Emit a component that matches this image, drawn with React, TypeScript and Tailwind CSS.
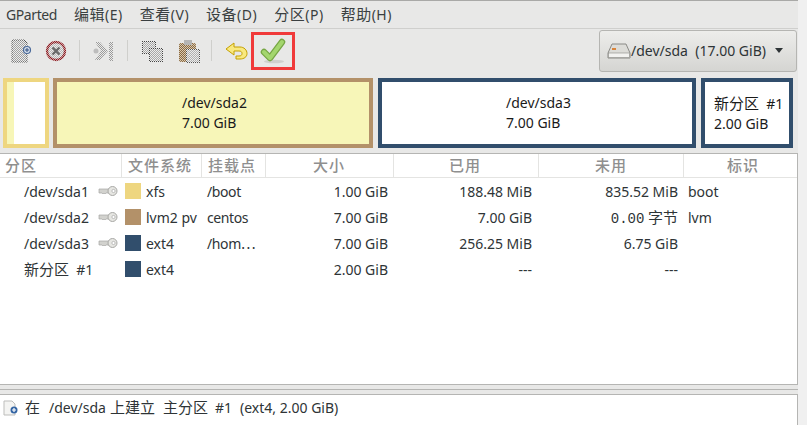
import React from "react";

const FONT = { fontFamily: '"Noto Sans", "Noto Sans CJK SC", sans-serif' };

const rows = [
  { name: "/dev/sda1", key: true, color: "bg-[#eed680]", fs: "xfs", mount: "/boot", size: "1.00 GiB", used: "188.48 MiB", flag: "boot" },
  { name: "/dev/sda2", key: true, color: "bg-[#b39169]", fs: "lvm2 pv", mount: "centos", size: "7.00 GiB", used: "7.00 GiB", flag: "lvm" },
  { name: "/dev/sda3", key: true, color: "bg-[#314e6c]", fs: "ext4", mount: "/hom⋯", size: "7.00 GiB", used: "256.25 MiB", flag: "" },
  { name: "new", key: false, color: "bg-[#314e6c]", fs: "ext4", mount: "", size: "2.00 GiB", used: "---", flag: "" },
];

const menus = [
  ["编辑", "(E)"],
  ["查看", "(V)"],
  ["设备", "(D)"],
  ["分区", "(P)"],
  ["帮助", "(H)"],
];

function Cjk({ children }: { children: React.ReactNode }) {
  return <span className="text-[15px]">{children}</span>;
}

function Dither({ id, color = "#8c8c8c", base = "#ececeb" }: { id: string; color?: string; base?: string }) {
  return (
    <pattern id={id} width="2" height="2" patternUnits="userSpaceOnUse">
      <rect width="2" height="2" fill={base} />
      <rect width="1" height="1" fill={color} />
      <rect x="1" y="1" width="1" height="1" fill={color} />
    </pattern>
  );
}

function NewIcon() {
  return (
    <svg width="22" height="24" viewBox="0 0 22 24">
      <defs><Dither id="d1" color="#a0a0a0" /><Dither id="d1b" color="#555" /></defs>
      <path d="M1 1h12l3 3v19H1z" fill="url(#d1)" />
      <path d="M1 1h12l3 3v19H1z" fill="none" stroke="url(#d1b)" />
      <circle cx="16" cy="11" r="3.5" fill="#d5deea" stroke="#4a6a9a" strokeWidth="1.2" />
      <path d="M14 11h4M16 9v4" stroke="#2f4f80" strokeWidth="1" />
    </svg>
  );
}

function DeleteIcon() {
  return (
    <svg width="22" height="22" viewBox="0 0 22 22">
      <defs><Dither id="d2" color="#b8b8b8" /><Dither id="d2b" color="#8f1d25" base="#c9a0a0" /></defs>
      <circle cx="11" cy="11" r="9" fill="url(#d2)" stroke="url(#d2b)" strokeWidth="2.4" />
      <path d="M7.5 7.5l7 7M14.5 7.5l-7 7" stroke="#6a6a6a" strokeWidth="2.4" />
    </svg>
  );
}

function ApplyAllIcon() {
  return (
    <svg width="22" height="22" viewBox="0 0 22 22">
      <defs><Dither id="d3" color="#9a9a9a" /></defs>
      <circle cx="4" cy="11" r="2.5" fill="#bdbdbd" />
      <path d="M3 2h5l8 9-8 9H3l6-9z" fill="url(#d3)" />
      <rect x="17" y="2" width="4" height="19" fill="url(#d3)" />
    </svg>
  );
}

function CopyIcon() {
  return (
    <svg width="22" height="22" viewBox="0 0 22 22">
      <defs><Dither id="d4" color="#a8a8a8" /><Dither id="d4b" color="#444" /></defs>
      <rect x="1.5" y="1.5" width="13" height="12" fill="url(#d4)" stroke="url(#d4b)" />
      <rect x="8.5" y="8.5" width="13" height="13" fill="url(#d4)" stroke="url(#d4b)" />
    </svg>
  );
}

function PasteIcon() {
  return (
    <svg width="22" height="24" viewBox="0 0 22 24">
      <defs>
        <Dither id="d5" color="#8a6a42" base="#d8c8b0" />
        <Dither id="d6" color="#b0b0b0" />
        <Dither id="d6b" color="#555" />
      </defs>
      <rect x="1" y="4" width="17" height="19" rx="2" fill="url(#d5)" />
      <rect x="6" y="1" width="8" height="5" fill="#b5b5b5" />
      <rect x="8.5" y="10.5" width="13" height="13" fill="url(#d6)" stroke="url(#d6b)" />
    </svg>
  );
}

function UndoIcon() {
  return (
    <svg width="23" height="18" viewBox="0 0 23 18">
      <path
        d="M1 7l8-6v4h6c4 0 7 3 7 6.5S19 17 15 17h-4v-3h3c2 0 3-1 3-2.5S16 9 14 9H9v4z"
        fill="#f9e97f"
        stroke="#c4a000"
        strokeWidth="1"
        strokeLinejoin="round"
      />
    </svg>
  );
}

function CheckIcon() {
  return (
    <svg width="26" height="26" viewBox="0 0 26 26">
      <ellipse cx="14" cy="23.5" rx="10" ry="1.8" fill="#d0d0ce" />
      <path d="M4 14l6 6L22 4" fill="none" stroke="#76a644" strokeWidth="6.5" strokeLinejoin="round" strokeLinecap="round" />
      <path d="M4 14l6 6L22 4" fill="none" stroke="#a4d66e" strokeWidth="4" strokeLinejoin="round" strokeLinecap="round" />
    </svg>
  );
}

function KeyIcon() {
  return (
    <svg width="20" height="12" viewBox="0 0 20 12">
      <path d="M1 4h11v4H8l-1 1-1-1-1 1-1-1H1z" fill="#d2d2ce" stroke="#a8a8a5" strokeWidth="0.7" />
      <circle cx="14.5" cy="6" r="4.5" fill="#e6e6e2" stroke="#a8a8a5" />
      <circle cx="15.5" cy="6" r="1.6" fill="#fff" stroke="#9c9c9c" strokeWidth="0.6" />
    </svg>
  );
}

function DiskIcon() {
  return (
    <svg width="24" height="16" viewBox="0 0 24 16">
      <path d="M5 1h14l4 9v5H1v-5z" fill="#dcdcd8" stroke="#8a8a86" />
      <rect x="1.5" y="10" width="21" height="4.5" fill="#f2f2f0" stroke="#8a8a86" strokeWidth="0.6" />
      <rect x="5" y="5" width="4" height="2" fill="#d9843b" />
    </svg>
  );
}

function Sep() {
  return <div className="w-px h-[21px] bg-[#cfcfcc]" />;
}

export default function App() {
  return (
    <div className="w-[807px] h-[425px] bg-[#f0f0f0] overflow-hidden text-[14px] text-[#2e3436]" style={FONT}>
      <div className="w-[798px] h-full flex flex-col bg-[#e8e8e7]">
        {/* Menu */}
        <div className="h-[29px] shrink-0 flex items-center gap-[17px] pl-[6px] border-t border-[#a9a9a7] border-b border-b-[#cfcfcd] text-[#3a3f40]">
          <span className="tracking-[-0.4px]">GParted</span>
          {menus.map(([zh, key]) => (
            <span key={zh} className="tracking-[0.5px] whitespace-nowrap">
              <Cjk>{zh}</Cjk>{key}
            </span>
          ))}
        </div>

        {/* Toolbar */}
        <div className="h-[49px] shrink-0 flex items-center pl-[11px] pr-[1px] pb-[6px]">
          <NewIcon />
          <div className="ml-[12px]"><DeleteIcon /></div>
          <div className="ml-[12px]"><Sep /></div>
          <div className="ml-[12px]"><ApplyAllIcon /></div>
          <div className="ml-[13px]"><Sep /></div>
          <div className="ml-[13px]"><CopyIcon /></div>
          <div className="ml-[15px]"><PasteIcon /></div>
          <div className="ml-[11px]"><Sep /></div>
          <div className="ml-[13px]"><UndoIcon /></div>
          <div className="ml-[3px] w-[44px] h-[38px] border-[3px] border-[#f03a3a] flex items-center justify-center"><CheckIcon /></div>
          <div className="ml-auto w-[198px] h-[42px] rounded-[3px] border border-[#b5b5b2] bg-linear-to-b from-[#ededeb] to-[#d5d5d2] flex items-center pl-[7px] text-[#2e3436]">
            <DiskIcon />
            <span className="whitespace-pre">/dev/sda  (17.00 GiB)</span>
            <span className="ml-[9px] w-0 h-0 border-x-[4.5px] border-x-transparent border-t-[5px] border-t-[#2e3436]" />
          </div>
        </div>

        {/* Partition map */}
        <div className="h-[70px] shrink-0 flex pl-[3px] text-[#1a1a1a]">
          <div className="w-[46px] border-[4px] border-[#eed680] bg-white">
            <div className="w-[7px] h-full bg-[#f7f6b8]" />
          </div>
          <div className="ml-[4px] w-[320px] border-[4px] border-[#b39169] bg-[#f7f6b8] flex flex-col items-center justify-center leading-[20px]">
            <span className="w-[62px] whitespace-nowrap">/dev/sda2</span>
            <span className="w-[62px] whitespace-nowrap">7.00 GiB</span>
          </div>
          <div className="ml-[5px] w-[318px] border-[4px] border-[#314e6c] bg-white flex flex-col items-center justify-center leading-[20px]">
            <span className="w-[62px] whitespace-nowrap">/dev/sda3</span>
            <span className="w-[62px] whitespace-nowrap">7.00 GiB</span>
          </div>
          <div className="ml-[5px] w-[92px] border-[4px] border-[#314e6c] bg-white flex flex-col justify-center pl-[9px] leading-[20px]">
            <span className="whitespace-pre"><Cjk>新分区</Cjk>  #1</span>
            <span>2.00 GiB</span>
          </div>
        </div>

        {/* Table */}
        <div className="mt-[5px] h-[231px] shrink-0 bg-white border-t border-[#b5b5b3] border-r border-r-[#b5b5b3] flex flex-col">
          <div className="h-[24px] shrink-0 flex items-center border-b border-[#e4e4e2] text-[#8f8f8f] font-medium text-[15px] tracking-[1px] leading-[23px]">
            <div className="w-[122px] pl-[5px] border-r border-[#e4e4e2]">分区</div>
            <div className="w-[80px] pl-[6px] border-r border-[#e4e4e2]">文件系统</div>
            <div className="w-[64px] pl-[6px] border-r border-[#e4e4e2]">挂载点</div>
            <div className="w-[128px] pl-[47px] border-r border-[#e4e4e2]">大小</div>
            <div className="w-[145px] pl-[55px] border-r border-[#e4e4e2]">已用</div>
            <div className="w-[145px] pl-[56px] border-r border-[#e4e4e2]">未用</div>
            <div className="pl-[43px] whitespace-nowrap">标识</div>
          </div>
          {rows.map((r) => (
            <div key={r.name} className="h-[26px] shrink-0 flex items-center text-[#2e3436] leading-[26px]">
              <div className="w-[98px] pl-[24px] pt-[1px] whitespace-pre">
                {r.name === "new" ? <><Cjk>新分区</Cjk>  #1</> : r.name}
              </div>
              <div className="w-[24px] h-[12px] flex">{r.key && <KeyIcon />}</div>
              <div className={`w-[16px] h-[16px] ml-[3px] ${r.color}`} />
              <div className="w-[60px] pl-[5px] pt-[1px] whitespace-nowrap">{r.fs}</div>
              <div className="w-[65px] pl-[6px] pt-[1px] whitespace-nowrap tracking-[-0.4px]">{r.mount}</div>
              <div className="w-[122px] pt-[1px] text-right">{r.size}</div>
              <div className="w-[144px] pt-[1px] text-right">{r.used}</div>
              <div className="w-[146px] pt-[1px] text-right whitespace-pre">
                {r.name === "/dev/sda1" && "835.52 MiB"}
                {r.name === "/dev/sda2" && (
                  <>
                    <span className="font-['Liberation_Mono']">0.00</span> <Cjk>字节</Cjk>
                  </>
                )}
                {r.name === "/dev/sda3" && "6.75 GiB"}
                {r.name === "new" && "---"}
              </div>
              <div className="pl-[10px] pt-[1px]">{r.flag}</div>
            </div>
          ))}
        </div>

        {/* Pane divider */}
        <div className="h-[11px] shrink-0 border-y border-[#b5b5b3] flex flex-col justify-center">
          <div className="h-px bg-[#b5b5b3]" />
        </div>

        {/* Pending operations */}
        <div className="flex-1 bg-white border-r border-[#b5b5b3]">
          <div className="h-[25px] flex items-center pl-[3px] whitespace-pre">
            <svg width="16" height="16" viewBox="0 0 16 16">
              <path d="M1 1h8l3 3v11H1z" fill="#f4f4f2" stroke="#bdbdbb" />
              <circle cx="11" cy="10" r="3.5" fill="#3465a4" />
              <path d="M9 10h4M11 8v4" stroke="#fff" strokeWidth="1.2" />
            </svg>
            <span className="ml-[6px]">
              <Cjk>在</Cjk><span className="ml-[9px]">/dev/sda</span>
              <span className="ml-[4px]"><Cjk>上建立</Cjk></span>
              <span className="ml-[8px]"><Cjk>主分区</Cjk></span>
              <span className="ml-[7px]">#1</span>
              <span className="ml-[8px]">(ext4, 2.00 GiB)</span>
            </span>
          </div>
        </div>
      </div>
    </div>
  );
}
